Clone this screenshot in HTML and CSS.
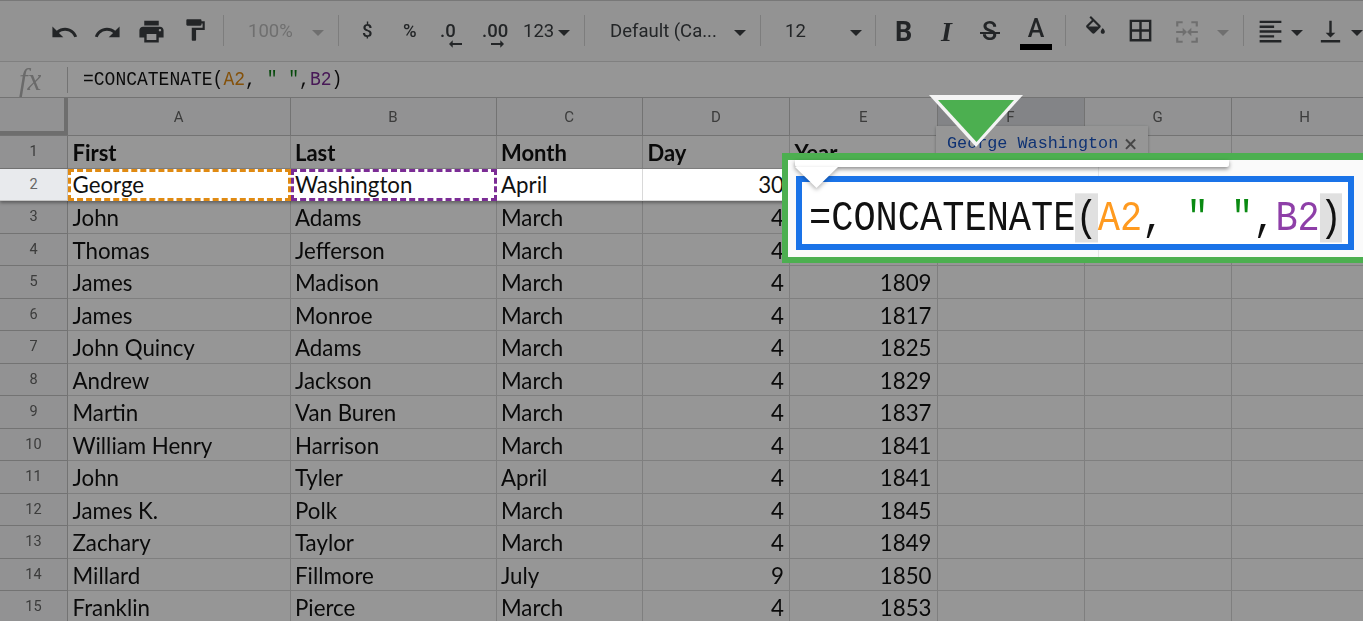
FILE: index.html
```html
<!DOCTYPE html>
<html lang="en">
<head>
  <meta charset="UTF-8" />
  <title>CONCATENATE - Sheets</title>
  <link rel="stylesheet" href="styles.css">
</head>
<body>

  <div class="toolbar">
    <svg class="icon undo" viewBox="0 0 24 24"><path d="M12.5 8c-2.65 0-5.05.99-6.9 2.6L2 7v9h9l-3.62-3.62c1.39-1.16 3.16-1.88 5.12-1.88 3.54 0 6.55 2.31 7.6 5.5l2.37-.78C21.08 11.03 17.15 8 12.5 8z"/></svg>
    <svg class="icon redo" viewBox="0 0 24 24"><path d="M18.4 10.6C16.55 8.99 14.15 8 11.5 8c-4.65 0-8.58 3.03-9.96 7.22L3.9 16c1.05-3.19 4.05-5.5 7.6-5.5 1.95 0 3.73.72 5.12 1.88L13 16h9V7l-3.6 3.6z"/></svg>
    <svg class="icon print" viewBox="0 0 24 24"><path d="M19 8H5c-1.66 0-3 1.34-3 3v6h4v4h12v-4h4v-6c0-1.66-1.34-3-3-3zm-3 11H8v-5h8v5zm3-7c-.55 0-1-.45-1-1s.45-1 1-1 1 .45 1 1-.45 1-1 1zm-1-9H6v4h12V3z"/></svg>
    <svg class="icon paint" viewBox="0 0 24 24"><path d="M18 4V3c0-.55-.45-1-1-1H5c-.55 0-1 .45-1 1v4c0 .55.45 1 1 1h12c.55 0 1-.45 1-1V6h1v4H9v11c0 .55.45 1 1 1h2c.55 0 1-.45 1-1v-9h8V4h-3z"/></svg>
    <span class="sep sep-a"></span>
    <span class="tool zoom off">100%</span>
    <span class="caret off caret-zoom"></span>
    <span class="sep sep-b"></span>
    <span class="tool dollar">$</span>
    <span class="tool percent">%</span>
    <span class="tool dec dec-less">.0<svg viewBox="0 0 14 8"><path d="M14 3H4V0L0 4l4 4V5h10z"/></svg></span>
    <span class="tool dec dec-more">.00<svg viewBox="0 0 14 8"><path d="M0 3h10V0l4 4-4 4V5H0z"/></svg></span>
    <span class="tool num">123</span>
    <span class="caret caret-num"></span>
    <span class="sep sep-c"></span>
    <span class="tool font">Default (Ca...</span>
    <span class="caret caret-font"></span>
    <span class="sep sep-d"></span>
    <span class="tool size">12</span>
    <span class="caret caret-size"></span>
    <span class="sep sep-e"></span>
    <span class="tool bold">B</span>
    <span class="tool italic">I</span>
    <span class="tool strike">S</span>
    <span class="tool color">A</span>
    <span class="sep sep-f"></span>
    <svg class="icon fill" viewBox="0 0 24 24"><path d="M16.56 8.94L7.62 0 6.21 1.41l2.38 2.38-5.15 5.15c-.59.59-.59 1.54 0 2.12l5.5 5.5c.29.29.68.44 1.06.44s.77-.15 1.06-.44l5.5-5.5c.59-.58.59-1.53 0-2.12zM5.21 10L10 5.21 14.79 10H5.21zM19 11.5s-2 2.17-2 3.5c0 1.1.9 2 2 2s2-.9 2-2c0-1.33-2-3.5-2-3.5z"/></svg>
    <svg class="icon borders" viewBox="0 0 24 24"><path d="M3 3v18h18V3H3zm8 16H5v-6h6v6zm0-8H5V5h6v6zm8 8h-6v-6h6v6zm0-8h-6V5h6v6z"/></svg>
    <svg class="icon merge" viewBox="0 0 24 24"><path d="M2 2h6v2H4v3H2zM16 2h6v5h-2V4h-4zM2 17h2v3h4v2H2zM20 17h2v5h-6v-2h4zM2 11h6V8l4 4-4 4v-3H2zM22 11h-6V8l-4 4 4 4v-3h6z"/></svg>
    <span class="caret off caret-merge"></span>
    <span class="sep sep-g"></span>
    <svg class="icon align" viewBox="0 0 24 24"><path d="M15 15H3v2h12v-2zm0-8H3v2h12V7zM3 13h18v-2H3v2zm0 8h18v-2H3v2zM3 3v2h18V3H3z"/></svg>
    <span class="caret caret-align"></span>
    <svg class="icon valign" viewBox="0 0 24 24"><path d="M16 13h-3V3h-2v10H8l4 4 4-4zM4 19v2h16v-2H4z"/></svg>
    <span class="caret caret-valign"></span>
  </div>

  <div class="formula-bar">
    <span class="fx">fx</span>
    <span class="fx-sep"></span>
    <span class="formula">=CONCATENATE(<span class="ref-a">A2</span>, <span class="str">"</span> <span class="str">"</span>,<span class="ref-b">B2</span>)</span>
  </div>

  <div class="sheet" id="sheet">
    <div class="row head">
      <div class="corner"></div>
      <div class="col">A</div><div class="col">B</div><div class="col">C</div><div class="col">D</div>
      <div class="col">E</div><div class="col col-on">F</div><div class="col">G</div><div class="col">H</div>
    </div>
  </div>

  <div class="chip"><span class="chip-name">George Washington</span><span class="chip-x">&times;</span></div>

  <div class="dim"></div>

  <!-- callout over the dimmed sheet -->
  <div class="callout">
    <div class="callout-grid"></div>
    <div class="popup"></div>
    <div class="editor"><span class="editor-text">=CONCATENATE<span class="paren">(</span><span class="edit-a">A2</span>, <span class="str-big">"</span> <span class="str-big">"</span>,<span class="edit-b">B2</span><span class="paren">)</span></span></div>
    <svg class="popup-tip" viewBox="0 0 43 21"><path d="M0 0h43L21.500 21z" fill="#fff"/></svg>
  </div>
  <svg class="arrow" viewBox="0 0 94 52"><path d="M0 0h94L47 52z" fill="#f4f4f4"/><path d="M9 5h76L47.500 47z" fill="#4caf50"/></svg>

  <script src="sheet.js"></script>
</body>
</html>
```

FILE: sheet.js
```js
const people = [
  ["First", "Last", "Month", "Day", "Year"],
  ["George", "Washington", "April", "30", ""],
  ["John", "Adams", "March", "4", ""],
  ["Thomas", "Jefferson", "March", "4", ""],
  ["James", "Madison", "March", "4", "1809"],
  ["James", "Monroe", "March", "4", "1817"],
  ["John Quincy", "Adams", "March", "4", "1825"],
  ["Andrew", "Jackson", "March", "4", "1829"],
  ["Martin", "Van Buren", "March", "4", "1837"],
  ["William Henry", "Harrison", "March", "4", "1841"],
  ["John", "Tyler", "April", "4", "1841"],
  ["James K.", "Polk", "March", "4", "1845"],
  ["Zachary", "Taylor", "March", "4", "1849"],
  ["Millard", "Fillmore", "July", "9", "1850"],
  ["Franklin", "Pierce", "March", "4", "1853"]
];

const sheet = document.getElementById("sheet");

people.forEach((p, i) => {
  const row = document.createElement("div");
  row.className = "row" + (i === 0 ? " title" : "") + (i === 1 ? " lit" : "");

  let html = `<div class="num-cell">${i + 1}</div>`;
  p.forEach((val, c) => {
    const right = i > 0 && c > 2 ? " right" : "";
    const mark = i === 1 && c === 0 ? " mark-a" : i === 1 && c === 1 ? " mark-b" : "";
    html += `<div class="cell${right}${mark}">${val}</div>`;
  });
  html += '<div class="cell"></div><div class="cell"></div><div class="cell"></div>';

  row.innerHTML = html;
  sheet.appendChild(row);
});
```

FILE: styles.css
```css
* { box-sizing: border-box; }
html, body { height: 100%; }
body {
  margin: 0;
  height: 621px;
  overflow: hidden;
  position: relative;
  background: #fff;
  font-family: Roboto, sans-serif;
  color: #3c4043;
  filter: blur(0.4px);
}

/* toolbar */
.toolbar {
  height: 62px;
  position: relative;
  background: #fafafa;
  border-top: 1px solid #ccc;
  border-bottom: 1px solid #dadada;
}
.toolbar > * { position: absolute; }
.icon { fill: #3c4043; }
.undo { left: 50px; top: 17px; width: 29px; height: 29px; }
.redo { left: 93px; top: 17px; width: 29px; height: 29px; }
.print { left: 137px; top: 16px; width: 29px; height: 29px; }
.paint { left: 182px; top: 16px; width: 26px; height: 26px; }
.sep { top: 14px; width: 1px; height: 31px; background: #d5d5d5; }
.sep-a { left: 223px; }
.sep-b { left: 338px; }
.sep-c { left: 584px; }
.sep-d { left: 760px; }
.sep-e { left: 875px; }
.sep-f { left: 1065px; }
.sep-g { left: 1243px; }
.tool { top: 18px; font-size: 18.500px; line-height: 24px; }
.off { color: #bdbdbd; }
.zoom { left: 248px; }
.dollar { left: 362px; font-weight: 500; }
.percent { left: 403px; font-weight: 500; }
.dec { font-weight: 500; }
.dec svg { position: absolute; width: 13px; height: 8px; left: 9px; top: 21px; fill: #3c4043; }
.dec-less { left: 440px; }
.dec-more { left: 482px; }
.num { left: 523px; }
.font { left: 610px; }
.size { left: 785px; }
.bold { left: 895px; top: 16px; font-size: 27px; line-height: 30px; font-weight: 700; }
.italic { left: 941px; top: 16px; font: italic 700 28px/30px "Liberation Serif", serif; }
.strike { left: 982px; top: 16px; font-size: 25px; line-height: 30px; font-weight: 500; }
.strike::after {
  content: "";
  position: absolute;
  left: -2px;
  right: -3px;
  top: 15px;
  height: 2px;
  background: #3c4043;
}
.color {
  left: 1020px;
  top: 14px;
  width: 32px;
  height: 35px;
  text-align: center;
  font-size: 25px;
  line-height: 27px;
  font-weight: 500;
  border-bottom: 6px solid #000;
}
.fill { left: 1083px; top: 15px; width: 25px; height: 25px; }
.borders { left: 1126px; top: 15px; width: 29px; height: 29px; }
.merge { left: 1174px; top: 18px; width: 26px; height: 26px; fill: #bdbdbd; }
.align { left: 1256px; top: 16px; width: 29px; height: 29px; }
.valign { left: 1316px; top: 16px; width: 29px; height: 29px; }
.caret {
  top: 29px;
  width: 0;
  height: 0;
  border-left: 6px solid transparent;
  border-right: 6px solid transparent;
  border-top: 6px solid #3c4043;
}
.caret.off { border-top-color: #bdbdbd; }
.caret-zoom { left: 312px; }
.caret-num { left: 558px; }
.caret-font { left: 734px; }
.caret-size { left: 850px; }
.caret-merge { left: 1217px; }
.caret-align { left: 1291px; }
.caret-valign { left: 1351px; }

/* formula bar */
.formula-bar {
  height: 36px;
  display: flex;
  align-items: center;
  background: #fff;
  border-bottom: 1px solid #c4c4c4;
}
.fx {
  width: 67px;
  padding-left: 19px;
  font: italic 31px "Liberation Serif", serif;
  color: #b5b5b5;
}
.fx-sep { width: 1px; height: 26px; background: #c4c4c4; }
.formula {
  margin-left: 15px;
  font: 18px "Liberation Mono", monospace;
  color: #111;
  white-space: pre;
  transform: scaleY(1.12);
  position: relative;
  top: -1px;
}
.ref-a { color: #e08a12; }
.ref-b { color: #7b2c95; }
.str { color: #0a7d12; }

/* sheet */
.row {
  display: grid;
  grid-template-columns: 68px 222.500px 206px 146.500px 147px 147.500px 147px 147px 147px;
  height: 32.500px;
}
.head { height: 38px; background: #f8f9fa; border-bottom: 1px solid #c4c4c4; }
.corner { border-right: 4px solid #bbb; border-bottom: 4px solid #bbb; }
.col {
  border-right: 1px solid #c4c4c4;
  display: flex;
  align-items: center;
  justify-content: center;
  font-size: 15px;
  color: #666;
}
.col-on { background: #dfe1e5; }
.num-cell {
  background: #f8f9fa;
  border-right: 1px solid #c4c4c4;
  border-bottom: 1px solid #c4c4c4;
  text-align: center;
  font-size: 14.500px;
  line-height: 31px;
  color: #666;
}
.cell {
  padding: 0 5px 0 4.500px;
  border-right: 1px solid #d9d9d9;
  border-bottom: 1px solid #d9d9d9;
  font-family: Lato, sans-serif;
  font-size: 22.300px;
  line-height: 34px;
  color: #111;
  background: #fff;
  overflow: hidden;
  white-space: nowrap;
}
.right { text-align: right; }
.title .cell { font-size: 22px; font-weight: 700; line-height: 34px; }
.lit {
  position: relative;
  z-index: 2;
  box-shadow: 0 2px 3px rgba(0,0,0,0.35);
}
.lit .num-cell { background: #e8eaed; }
.lit .cell { line-height: 32px; }
.lit .mark-a, .lit .mark-b { line-height: 26px; padding-left: 1.500px; border-width: 3px; border-style: dashed; }
.mark-a { border-color: #e08a12; }
.mark-b { border-color: #7b2c95; }

/* name preview under the dim layer */
.chip {
  position: absolute;
  left: 936px;
  top: 126px;
  width: 212px;
  height: 32px;
  display: flex;
  align-items: flex-start;
  gap: 6px;
  padding: 8px 0 0 11px;
  background: #fff;
  box-shadow: 0 1px 3px rgba(0,0,0,0.3);
  color: #1a56c4;
}
.chip-name { font: 16.800px/20px "Liberation Mono", monospace; white-space: pre; }
.chip-x { color: #777; font-size: 24px; line-height: 20px; }

.dim {
  position: absolute;
  inset: 0;
  z-index: 1;
  background: rgba(0,0,0,0.41);
}

/* green callout */
.callout {
  position: absolute;
  z-index: 3;
  left: 782px;
  top: 153px;
  width: 590px;
  height: 110px;
  background: #fafafa;
  border: 6px solid #4caf50;
  border-top-width: 7px;
}
.callout-grid {
  position: absolute;
  inset: 0;
  background:
    linear-gradient(#e5e5e5, #e5e5e5) 310px 0 / 1px 100% no-repeat;
}
.popup {
  position: absolute;
  left: 7px;
  top: 0;
  width: 434px;
  height: 7px;
  background: #fff;
  box-shadow: 0 2px 4px rgba(0,0,0,0.45);
  border-radius: 0 0 2px 2px;
}
.editor {
  position: absolute;
  left: 8px;
  top: 16px;
  width: 558px;
  height: 74px;
  padding: 8px 0 0 7px;
  background: #fff;
  border: 6px solid #1a73e8;
}
.editor-text {
  display: block;
  font: 37px/57px "Liberation Mono", monospace;
  color: #111;
  white-space: pre;
  transform: scaleY(1.17);
}
.paren { background: #e0e0e0; }
.edit-a { color: #ff9a1f; }
.edit-b { color: #8e3fa8; }
.str-big { color: #0a8a12; }
.popup-tip {
  position: absolute;
  left: 7px;
  top: 7px;
  width: 43px;
  height: 21px;
  filter: drop-shadow(0 2px 2px rgba(0,0,0,0.3));
}
.arrow {
  position: absolute;
  z-index: 4;
  left: 929px;
  top: 95px;
  width: 94px;
  height: 52px;
}
```
